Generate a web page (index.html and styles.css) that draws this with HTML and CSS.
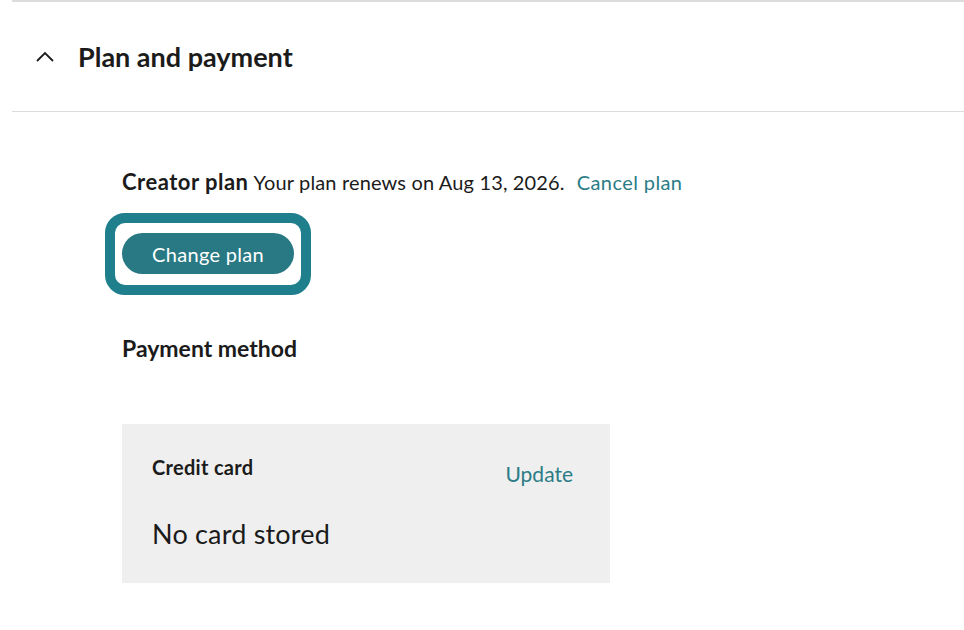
FILE: index.html
```html
<!DOCTYPE html>
<html lang="en">
<head>
<meta charset="utf-8">
<title>Plan and payment</title>
<link rel="stylesheet" href="styles.css">
</head>
<body>
<section class="panel">
  <header class="panel-header">
    <svg class="chevron" width="18" height="11" viewBox="0 0 18 11" aria-hidden="true">
      <path d="M1 10 L9 2 L17 10" fill="none" stroke="#1b1b1b" stroke-width="1.8"/>
    </svg>
    <h2 class="panel-title">Plan and payment</h2>
  </header>
  <div class="panel-body">
    <p class="plan-line"><span class="plan-name">Creator plan</span> <span class="plan-renew">Your plan renews on Aug 13, 2026.</span><a class="link cancel" href="#">Cancel plan</a></p>
    <div class="focus-ring">
      <button class="btn-primary" type="button">Change plan</button>
    </div>
    <h3 class="sub-title">Payment method</h3>
    <div class="card-box">
      <div class="card-row">
        <span class="card-label">Credit card</span>
        <a class="link update" href="#">Update</a>
      </div>
      <div class="card-value">No card stored</div>
    </div>
  </div>
</section>
</body>
</html>
```

FILE: styles.css
```css
* { box-sizing: border-box; }
html, body { margin: 0; padding: 0; background: #fff; }
body {
  font-family: Lato, "Open Sans", sans-serif;
  color: #1b1b1b;
  width: 964px;
  height: 630px;
  overflow: hidden;
}
.panel {
  margin-left: 12px;
  border-top: 2px solid #dcdcdc;
}
.panel-header {
  height: 110px;
  display: flex;
  align-items: center;
  padding-left: 24px;
  border-bottom: 1px solid #dcdcdc;
}
.chevron { display: block; margin-right: 24px; margin-top: -1px; }
.panel-title {
  margin: 0;
  font-size: 27px;
  font-weight: 700;
  line-height: 32px;
  color: #1b1b1b;
}
.panel-body { padding-left: 110px; padding-top: 57px; }
.plan-line {
  margin: 0;
  line-height: 26px;
  display: flex;
  align-items: baseline;
}
.plan-name { font-size: 22px; font-weight: 700; letter-spacing: 0.5px; margin-right: 5px; }
.plan-renew { font-size: 20px; letter-spacing: 0.15px; }
.link { color: #2b7c86; text-decoration: none; }
.cancel { margin-left: 12px; font-size: 20px; letter-spacing: 0.4px; }
.focus-ring {
  display: inline-block;
  margin-top: 18px;
  margin-left: -17px;
  border: 10px solid #1f7f8c;
  border-radius: 20px;
  padding: 10px 7px 11px 7px;
}
.btn-primary {
  display: block;
  width: 172px;
  height: 41px;
  border: none;
  border-radius: 21px;
  background: #287983;
  color: #fff;
  font-family: Lato, "Open Sans", sans-serif;
  font-size: 20px;
  letter-spacing: 0.3px;
  padding: 0;
}
.sub-title {
  margin: 40px 0 0 0;
  font-size: 23px;
  font-weight: 700;
  line-height: 26px;
}
.card-box {
  margin-top: 63px;
  width: 488px;
  height: 159px;
  background: #efefef;
  padding: 30px 37px 0 30px;
}
.card-row {
  display: flex;
  justify-content: space-between;
  align-items: flex-start;
}
.card-label { font-size: 20px; font-weight: 700; letter-spacing: 0.3px; line-height: 26px; }
.update { font-size: 21px; line-height: 26px; margin-top: 7px; }
.card-value { margin-top: 31px; font-size: 27px; letter-spacing: 0.2px; line-height: 32px; }
```
